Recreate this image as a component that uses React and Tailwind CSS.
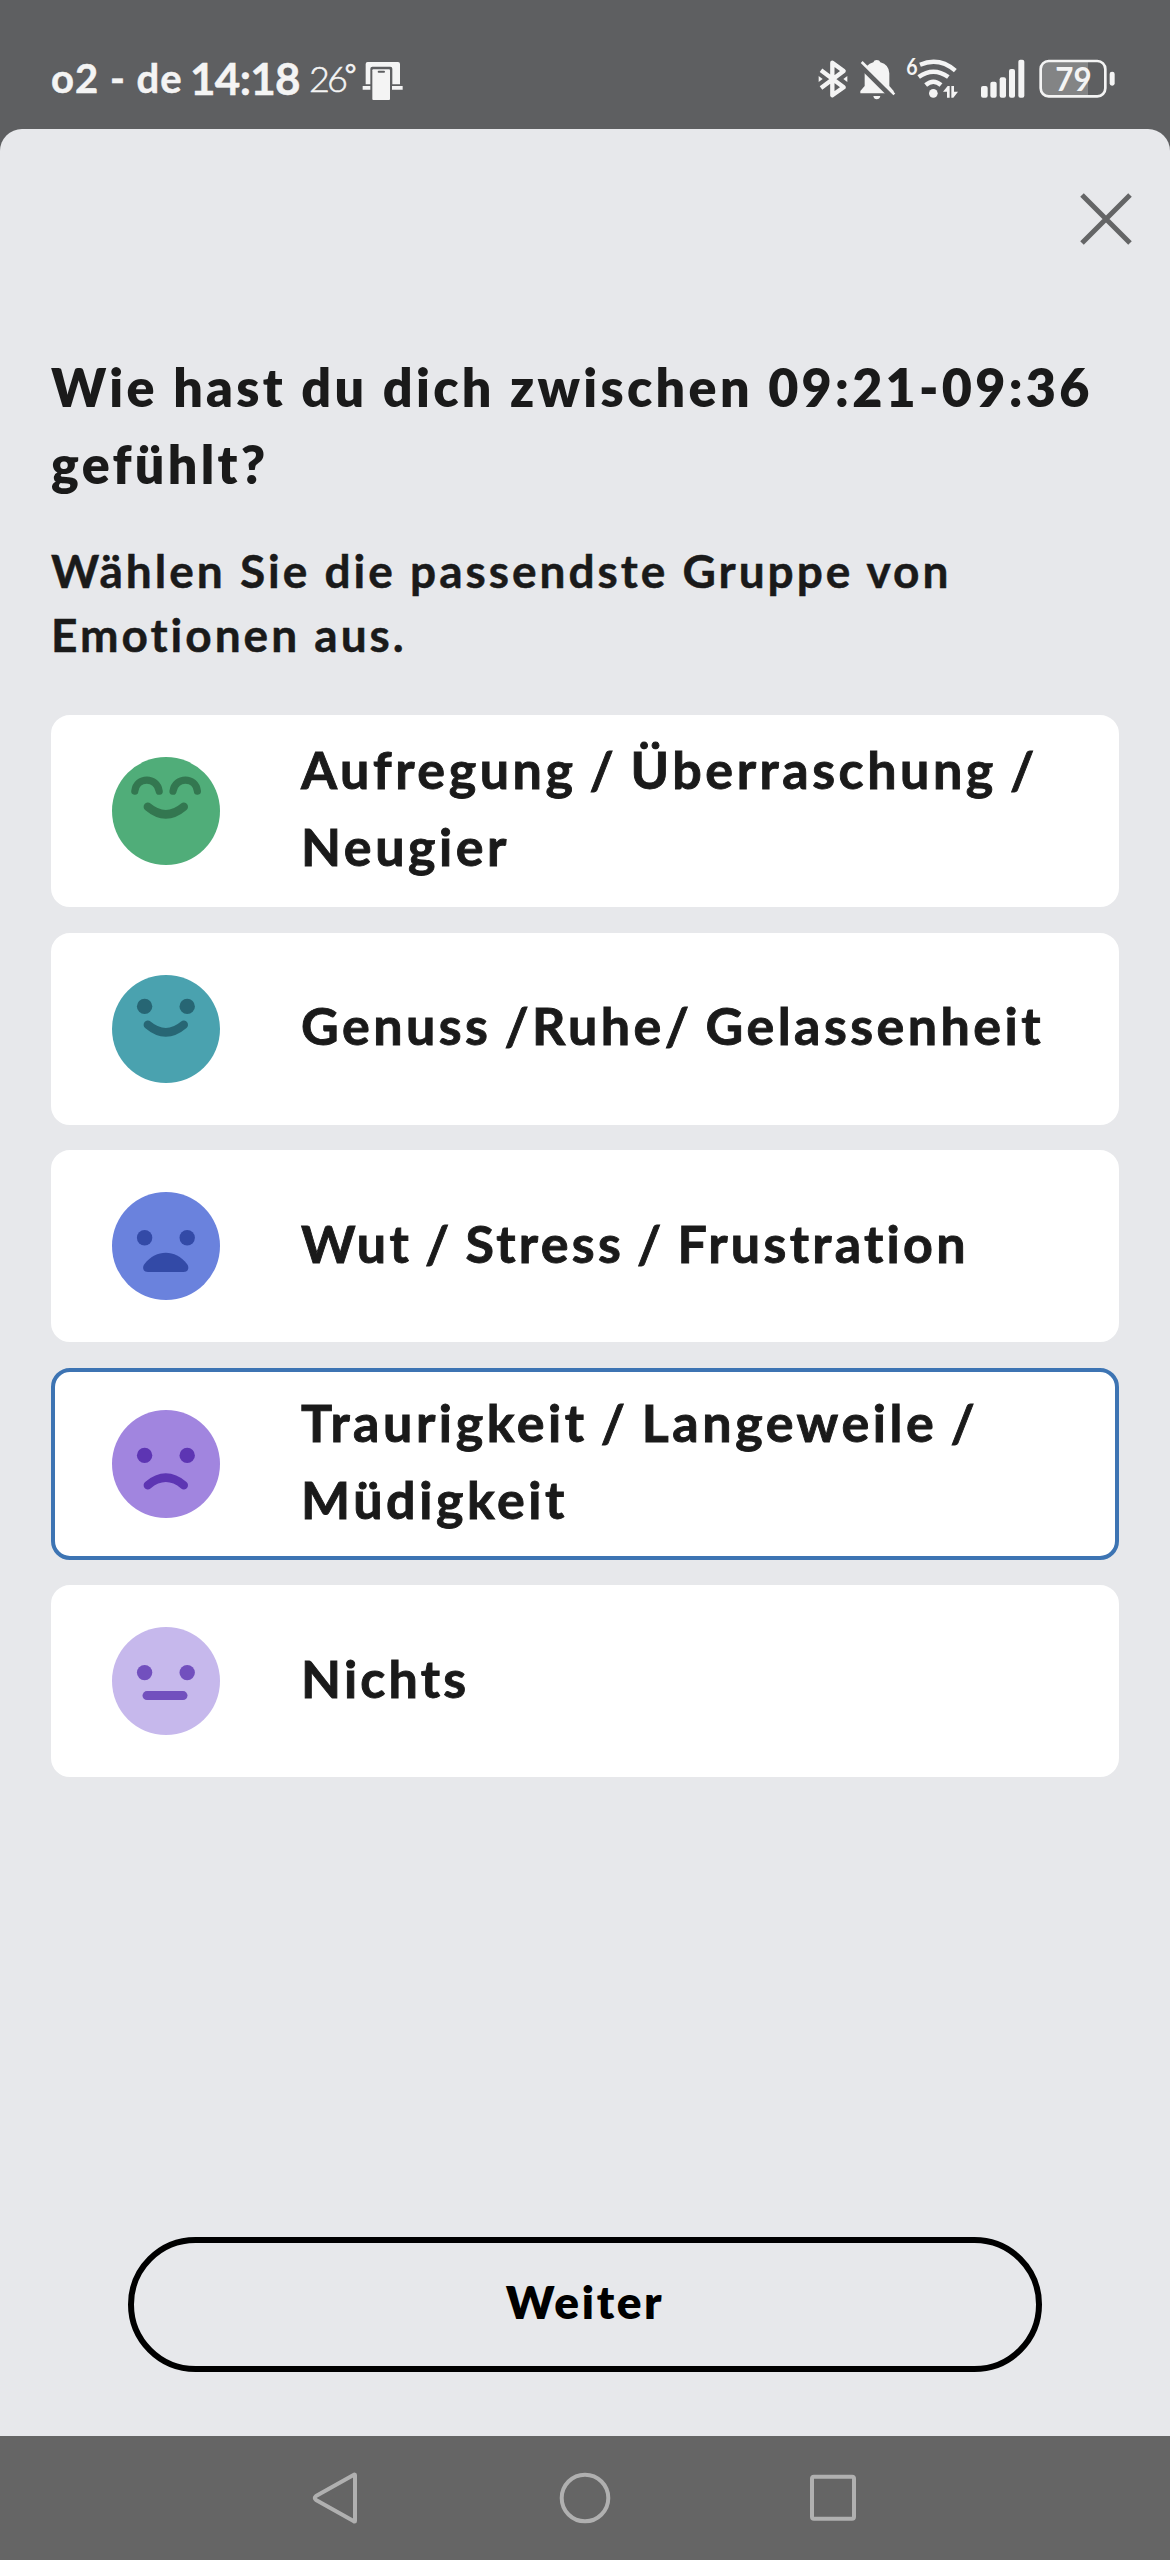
import React, { useState } from "react";

const SMILE = "M35.8 49.8 Q53.8 65 71.8 49.8";

function DotEyes({ y }) {
  return (
    <g fill="currentColor" stroke="none">
      <circle cx="32.6" cy={y} r="7.7" />
      <circle cx="75.2" cy={y} r="7.7" />
    </g>
  );
}

function Face({ className, children }) {
  return (
    <svg
      viewBox="0 0 108 108"
      className={`h-[108px] w-[108px] shrink-0 ${className}`}
      fill="none"
      stroke="currentColor"
      strokeWidth="8.4"
      strokeLinecap="round"
    >
      {children}
    </svg>
  );
}

const emotions = [
  {
    id: "excited",
    label: "Aufregung / Überraschung /\nNeugier",
    spacing: "tracking-[3.55px]",
    face: (
      <Face className="text-[#337750]">
        <circle cx="54" cy="54" r="54" fill="#50ad79" stroke="none" />
        <path d="M22.8 34.2 C24.5 19.4 45 19.4 47.2 34.2" strokeWidth="7.2" />
        <path d="M61 34.2 C63.2 19.4 83.7 19.4 85.4 34.2" strokeWidth="7.2" />
        <path d={SMILE} />
      </Face>
    ),
  },
  {
    id: "calm",
    label: "Genuss /Ruhe/ Gelassenheit",
    spacing: "tracking-[3.46px]",
    face: (
      <Face className="text-[#276674]">
        <circle cx="54" cy="54" r="54" fill="#4aa2af" stroke="none" />
        <DotEyes y="31.4" />
        <path d={SMILE} />
      </Face>
    ),
  },
  {
    id: "angry",
    label: "Wut / Stress / Frustration",
    spacing: "tracking-[3.3px]",
    face: (
      <Face className="text-[#334aa7]">
        <circle cx="54" cy="54" r="54" fill="#6a82dd" stroke="none" />
        <DotEyes y="45.8" />
        <path
          d="M36 80 C31 80 29.8 75.5 32.5 72 C38.5 64.5 46 60.8 53.8 60.8 C61.5 60.8 69 64.5 75 72 C77.6 75.5 76.4 80 71.6 80 Z"
          fill="currentColor"
          stroke="none"
        />
      </Face>
    ),
  },
  {
    id: "sad",
    label: "Traurigkeit / Langeweile /\nMüdigkeit",
    spacing: "tracking-[3.55px]",
    face: (
      <Face className="text-[#5d35b3]">
        <circle cx="54" cy="54" r="54" fill="#a185df" stroke="none" />
        <DotEyes y="45.4" />
        <path d="M35.8 75.2 Q53.8 60.2 71.8 75.2" />
      </Face>
    ),
  },
  {
    id: "neutral",
    label: "Nichts",
    spacing: "tracking-[3.2px]",
    face: (
      <Face className="text-[#7250be]">
        <circle cx="54" cy="54" r="54" fill="#c6b8ec" stroke="none" />
        <DotEyes y="45.6" />
        <path d="M35 68.6 H71" strokeWidth="9" />
      </Face>
    ),
  },
];

function StatusBar() {
  return (
    <header className="flex h-[129px] shrink-0 items-start justify-between bg-[#5e5f61] pr-[54px] pl-[51px] text-[#f4f4f4]">
      <div className="flex items-start leading-none whitespace-nowrap">
        <span className="mt-[58px] w-[139px] text-[40px] font-bold tracking-[1px] [-webkit-text-stroke:0.5px]">
          o2 - de
        </span>
        <span className="mt-[56px] w-[119px] text-[44px] font-bold tracking-[-0.7px] [-webkit-text-stroke:0.5px]">
          14:18
        </span>
        <span className="mt-[60px] flex w-[53px] items-start text-[36px] font-light tracking-[-3px] [-webkit-text-stroke:0.5px]">
          26
          <span className="text-[28px] font-normal">°</span>
        </span>
        {/* connected devices */}
        <svg viewBox="1084 54 126 129" className="mt-[58px] h-[43px] w-[42px]" fill="currentColor">
          <path d="M1095 133 V72 Q1095 66 1101 66 H1192 Q1198 66 1198 72 V133 H1175 V86 Q1175 80 1169 80 H1115 Q1109 80 1109 86 V133 Z" />
          <path d="M1086 138 H1109 V149 H1086 Z M1174 138 H1206 V149 H1174 Z" />
          <rect x="1115" y="88" width="53" height="92" rx="3" />
          <rect x="1131" y="92" width="22" height="6" rx="3" fill="#5e5f61" />
        </svg>
      </div>

      <div className="mt-[58px] flex items-start">
        {/* bluetooth */}
        <svg viewBox="80 54 93 126" className="h-[42px] w-[31px]" fill="none" stroke="currentColor" strokeWidth="13" strokeLinejoin="round">
          <path d="M89 91 L157 142 L123 166 V68 L157 93 L89 144" />
          <path d="M82 108 L94 117 L82 126 Z M168 108 L156 117 L168 126 Z" fill="currentColor" stroke="none" />
        </svg>
        {/* muted bell */}
        <svg viewBox="204 54 111 126" className="ml-[10px] h-[42px] w-[37px]" fill="currentColor">
          <path d="M208 160 V153 L221 138 V100 Q222 73 247 67 Q249 60 257 60 Q266 60 268 67 Q294 74 295 100 V138 L308 153 V160 Z" />
          <path d="M247 168 H268 Q266 178 257 178 Q249 178 247 168 Z" />
          <path d="M205 70 L303 168" stroke="#5e5f61" strokeWidth="20" />
          <path d="M212 66 L310 163" stroke="currentColor" strokeWidth="8" />
        </svg>
        {/* wifi 6 */}
        <svg viewBox="340 33 168 147" className="-mt-[7px] ml-[8px] h-[49px] w-[56px]" fill="currentColor">
          <text x="347" y="104" fontSize="66" fontWeight="700" textLength="34" lengthAdjust="spacingAndGlyphs">
            6
          </text>
          <circle cx="428" cy="160" r="13" />
          <g fill="none" stroke="currentColor" strokeWidth="13">
            <path d="M388 74 Q446 50 494 92" />
            <path d="M384 111 Q428 79 473 111" />
            <path d="M405 135 Q428 115 451 135" />
          </g>
          <path d="M457 155 L471 138 H477 V173 H469 V155 Z M482 138 H490 V155 H502 L488 173 H482 Z" />
        </svg>
        {/* signal strength */}
        <svg viewBox="568 54 135 126" className="ml-[20px] h-[42px] w-[45px]" fill="currentColor">
          <rect x="571" y="138" width="20" height="35" rx="6" />
          <rect x="599" y="125" width="19" height="48" rx="6" />
          <rect x="627" y="112" width="19" height="61" rx="6" />
          <rect x="655" y="87" width="18" height="86" rx="6" />
          <rect x="683" y="59" width="18" height="114" rx="6" />
        </svg>
        {/* battery */}
        <svg viewBox="742 54 234 126" className="ml-[13px] h-[42px] w-[78px]" fill="currentColor">
          <path d="M778 64 H892 V168 H778 Q752 168 752 144 V88 Q752 64 778 64 Z" fill="#838485" />
          <rect x="750" y="63" width="194" height="106" rx="24" fill="none" stroke="currentColor" strokeWidth="8" />
          <rect x="957" y="95" width="15" height="42" rx="7" />
          <text x="794" y="152" fontSize="98" fontWeight="700" textLength="109" lengthAdjust="spacingAndGlyphs">
            79
          </text>
        </svg>
      </div>
    </header>
  );
}

function EmotionCard({ emotion, selected, onSelect }) {
  return (
    <button
      type="button"
      onClick={onSelect}
      className={`flex h-[192px] w-full items-center rounded-[19px] border-4 bg-white pl-[57px] text-left ${
        selected ? "border-[#3d74b3]" : "border-white"
      }`}
    >
      {emotion.face}
      <span
        className={`ml-[81px] pb-[6px] text-[52px] leading-[77px] font-bold [word-spacing:-3px] whitespace-pre text-[#1a1a1a] [-webkit-text-stroke:0.9px] ${emotion.spacing}`}
      >
        {emotion.label}
      </span>
    </button>
  );
}

function NavBar() {
  return (
    <nav className="flex h-[124px] shrink-0 items-center justify-center bg-[#656565]">
      <svg viewBox="0 0 550 54" className="h-[54px] w-[550px]" fill="none" stroke="#b0b0b0" strokeWidth="4" strokeLinejoin="round">
        <path d="M45 4 V50 Q45 51 43.5 50 L6 29 Q3.5 27 6 25 L43.5 4 Q45 3 45 4 Z" />
        <circle cx="275" cy="27" r="23.3" />
        <rect x="502" y="5.8" width="42" height="42" rx="2" />
      </svg>
    </nav>
  );
}

export default function App() {
  const [selectedId, setSelectedId] = useState("sad");

  return (
    <div className="flex h-[2560px] w-[1170px] flex-col bg-[#5e5f61] font-['Lato','Noto_Sans',sans-serif]">
      <StatusBar />

      <main className="flex min-h-0 flex-1 flex-col rounded-t-[22px] bg-[#e7e8eb] px-[51px]">
        <div className="-mr-[13px] flex justify-end pt-[64px]">
          <button type="button" aria-label="Schließen">
            <svg viewBox="0 0 52 52" className="h-[52px] w-[52px]" stroke="#646566" strokeWidth="5">
              <path d="M2 2 L50 50 M50 2 L2 50" />
            </svg>
          </button>
        </div>

        <h1 className="mt-[104px] text-[52px] leading-[77px] font-extrabold tracking-[3.3px] whitespace-pre text-[#1a1a1a]">
          {"Wie hast du dich zwischen 09:21-09:36\ngefühlt?"}
        </h1>
        <p className="mt-[36px] text-[46px] leading-[64px] font-bold tracking-[3px] whitespace-pre text-[#1a1a1a] [-webkit-text-stroke:0.5px]">
          {"Wählen Sie die passendste Gruppe von\nEmotionen aus."}
        </p>

        <div className="mt-[48px] flex flex-col gap-[25.6px]">
          {emotions.map((emotion) => (
            <EmotionCard
              key={emotion.id}
              emotion={emotion}
              selected={emotion.id === selectedId}
              onSelect={() => setSelectedId(emotion.id)}
            />
          ))}
        </div>

        <button
          type="button"
          className="mx-[77px] mt-auto mb-[64px] h-[135px] rounded-full border-[6.4px] border-black pb-[6px] text-[46px] leading-none font-extrabold tracking-[2.6px] text-black"
        >
          Weiter
        </button>
      </main>

      <NavBar />
    </div>
  );
}
